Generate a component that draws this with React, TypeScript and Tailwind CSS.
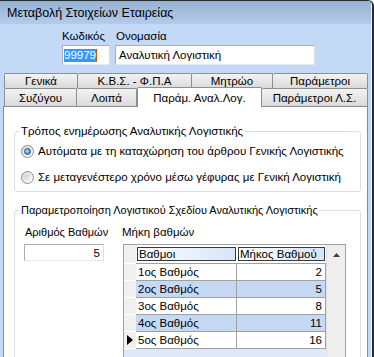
const rows = [
  { name: "1ος Βαθμός", len: 2, alt: false },
  { name: "2ος Βαθμός", len: 5, alt: true },
  { name: "3ος Βαθμός", len: 8, alt: false },
  { name: "4ος Βαθμός", len: 11, alt: true },
  { name: "5ος Βαθμός", len: 16, alt: false, current: true },
];

function Radio({ checked }: { checked?: boolean }) {
  return (
    <span className="w-[13px] h-[13px] rounded-full border border-[#8a8a8a] bg-gradient-to-br from-[#dcdcdc] to-white flex items-center justify-center shrink-0">
      {checked ? (
        <span className="w-[7px] h-[7px] rounded-full border border-[#1d4c86] bg-[radial-gradient(circle_at_35%_35%,#b9e2ff,#2a6fc2)]" />
      ) : (
        <span className="w-[7px] h-[7px] rounded-full bg-gradient-to-br from-[#cfcfcf] to-[#f5f5f5]" />
      )}
    </span>
  );
}

function Tab({ label, w, first }: { label: string; w: string; first?: boolean }) {
  return (
    <div
      className={`${w} h-full flex items-center justify-center border-t border-r border-[#8e8f8f] ${first ? "border-l" : ""} rounded-t-[2px] bg-gradient-to-b from-[#f3f3f3] to-[#dadada]`}
    >
      {label}
    </div>
  );
}

export default function App() {
  return (
    <div className="w-[374px] h-[357px] overflow-hidden bg-white font-['Liberation_Sans',Arial,sans-serif] text-[11.5px] leading-[14px] text-black whitespace-nowrap">
      <div className="h-[357px] border-t border-r-2 border-[#2b2b2b] rounded-tr-[6px] overflow-hidden">
        <div className="h-full border-r border-[#eaf1fb] bg-[#c4d9f6] flex flex-col">
          {/* Title bar */}
          <div className="h-[23px] shrink-0 bg-gradient-to-b from-[#97b1d2] to-[#b3cceb] pl-[7px] pt-[5px] text-[12.5px] leading-[15px]">
            Μεταβολή Στοιχείων Εταιρείας
          </div>

          {/* Code / name */}
          <div className="flex mt-[5px] pl-[62px]">
            <div className="w-[54px]">Κωδικός</div>
            <div>Ονομασία</div>
          </div>
          <div className="flex mt-[2px] pl-[62px] gap-[5px]">
            <div className="w-[48px] h-[20px] bg-white border border-[#abadb3] border-b-[#e3e9ef] border-r-[#dbdfe6] flex items-center pl-[1px]">
              <span className="bg-[#3399ff] text-white leading-[13px]">99979</span>
              <span className="w-[1px] h-[13px] bg-[#c85a00]" />
            </div>
            <div className="w-[200px] h-[20px] bg-white border border-[#abadb3] border-b-[#e3e9ef] border-r-[#dbdfe6] flex items-center pl-[3px]">
              Αναλυτική Λογιστική
            </div>
          </div>

          {/* Tabs */}
          <div className="mt-[8px] ml-[4px] flex h-[16px]">
            <Tab label="Γενικά" w="w-[74px]" first />
            <Tab label="Κ.Β.Σ. - Φ.Π.Α" w="w-[114px]" />
            <Tab label="Μητρώο" w="w-[81px]" />
            <Tab label="Παράμετροι" w="w-[95px]" />
          </div>
          <div className="ml-[4px] flex items-start h-[18px]">
            <Tab label="Συζύγου" w="w-[73px]" first />
            <Tab label="Λοιπά" w="w-[60px]" />
            <div className="relative z-10 w-[125px] h-[20px] -mt-px -mb-px bg-white border-t border-x border-[#8e8f8f] rounded-t-[2px] flex justify-center pt-[3px]">
              Παράμ. Αναλ.Λογ.
            </div>
            <Tab label="Παράμετροι Λ.Σ." w="w-[106px]" />
          </div>

          {/* Panel */}
          <div className="ml-[3px] w-[365px] flex-1 bg-white border border-[#898c95] flex flex-col">
            <fieldset className="mt-[17px] ml-[10px] mr-[6px] border border-[#d5dfe5] rounded-[3px] px-[4px] pb-[6px]">
              <legend className="px-[2px]">Τρόπος ενημέρωσης Αναλυτικής Λογιστικής</legend>
              <div className="flex items-center gap-[4px] ml-[2px] mt-[5px] h-[16px]">
                <Radio checked />
                <span>Αυτόματα με τη καταχώρηση του άρθρου Γενικής Λογιστικής</span>
              </div>
              <div className="flex items-center gap-[4px] ml-[2px] mt-[10px] h-[16px]">
                <Radio />
                <span>Σε μεταγενέστερο χρόνο μέσω γέφυρας με Γενική Λογιστική</span>
              </div>
            </fieldset>

            <fieldset className="mt-[11px] ml-[10px] mr-[6px] flex-1 border border-[#d5dfe5] rounded-[3px] px-[4px]">
              <legend className="px-[2px] text-[11px]">Παραμετροποίηση Λογιστικού Σχεδίου Αναλυτικής Λογιστικής</legend>
              <div className="flex pt-[8px]">
                <div className="ml-[5px] w-[80px]">
                  <div className="pl-[1px] h-[14px] text-[11px]">Αριθμός Βαθμών</div>
                  <div className="mt-[5px] h-[17px] border border-[#abadb3] border-b-[#e3e9ef] border-r-[#dbdfe6] flex items-center justify-end pr-[3px]">
                    5
                  </div>
                </div>
                <div className="ml-[18px]">
                  <div className="h-[14px]">Μήκη βαθμών</div>
                  <div className="mt-[5px] ml-[1px] w-[223px] h-[130px] border border-[#a0a0a0] flex">
                    <div className="w-[202px] flex flex-col">
                      <div className="h-[19px] flex">
                        <div className="w-[12px] bg-[#f0f0f0] border-b border-white" />
                        <div className="w-[101px] pt-[2px] pl-[1px] pr-[1px] border-b border-[#a0a0a0]">
                          <div className="h-[14px] border border-[#3a3a3a] bg-gradient-to-r from-white to-[#d6e5f8] pl-[1px] leading-[12px]">
                            Βαθμοι
                          </div>
                        </div>
                        <div className="w-[89px] pt-[2px] pl-[1px] pr-[1px] border-b border-[#a0a0a0]">
                          <div className="h-[14px] border border-[#3a3a3a] bg-gradient-to-r from-white to-[#d6e5f8] pl-[1px] leading-[12px]">
                            Μήκος Βαθμού
                          </div>
                        </div>
                      </div>
                      {rows.map((r) => (
                        <div key={r.name} className="h-[17px] flex">
                          <div className="w-[12px] bg-[#f0f0f0] border-b border-white flex items-center pl-[3px]">
                            {r.current && (
                              <svg width="6" height="10" viewBox="0 0 6 10">
                                <path d="M0 0 L6 5 L0 10 Z" fill="#000" />
                              </svg>
                            )}
                          </div>
                          <div
                            className={`w-[101px] border-r border-b border-[#a0a0a0] flex items-center pl-[2px] ${r.alt ? "bg-[#c5d9f5]" : "bg-white"}`}
                          >
                            {r.name}
                          </div>
                          <div
                            className={`w-[89px] border-r border-b border-[#a0a0a0] flex items-center justify-end pr-[3px] ${r.alt ? "bg-[#c5d9f5]" : "bg-white"}`}
                          >
                            {r.len}
                          </div>
                        </div>
                      ))}
                      <div className="flex-1 bg-[#dfe9fa]" />
                    </div>
                    <div className="w-[19px] bg-[#eeeeee] border-l border-[#e2e2e2] flex justify-center pt-[8px]">
                      <svg width="7" height="4" viewBox="0 0 7 4">
                        <path d="M0 4 L3.5 0 L7 4 Z" fill="#404040" />
                      </svg>
                    </div>
                  </div>
                </div>
              </div>
            </fieldset>
          </div>
        </div>
      </div>
    </div>
  );
}
